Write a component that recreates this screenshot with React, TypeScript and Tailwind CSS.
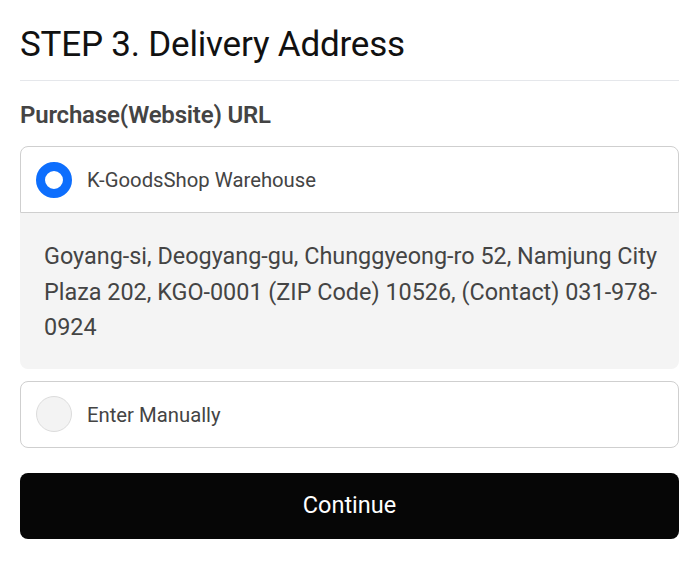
export default function App() {
  return (
    <div className="w-[699px] h-[565px] bg-white px-5 pt-[23px]" style={{ fontFamily: "Roboto, 'Noto Sans', sans-serif" }}>
      <h1 className="text-[35px] leading-[44px] tracking-[-0.2px] text-[#111] font-normal">STEP 3. Delivery Address</h1>
      <div className="mt-[13px] h-px bg-[#e5e7eb]" />
      <div className="mt-[20px] text-[24px] leading-[28px] tracking-[-0.2px] font-semibold text-[#444]">Purchase(Website) URL</div>
      <div className="mt-[17px]">
        <label className="flex items-center h-[67px] border border-[#cfcfcf] rounded-t-lg px-[15px] gap-[15px] bg-white">
          <span className="w-9 h-9 rounded-full border-[9px] border-[#0d6efd] bg-white" />
          <span className="text-[20.3px] text-[#444] pt-[2px]">K-GoodsShop Warehouse</span>
        </label>
        <div className="bg-[#f4f4f4] rounded-b-lg pl-6 pr-[14px] pt-[26px] pb-[23px] text-[23.4px] leading-[35.5px] text-[#444]">
          Goyang-si, Deogyang-gu, Chunggyeong-ro 52, Namjung City Plaza 202, KGO-0001 (ZIP Code) 10526, (Contact) 031-978-0924
        </div>
      </div>
      <label className="mt-[12px] flex items-center h-[67px] border border-[#cfcfcf] rounded-lg px-[15px] gap-[15px] bg-white">
        <span className="w-9 h-9 rounded-full border border-[#dcdcdc] bg-[#f3f3f3]" />
        <span className="text-[20.3px] text-[#444] pt-[2px]">Enter Manually</span>
      </label>
      <button className="mt-[25px] w-full h-[66px] rounded-lg bg-[#060606] text-white text-[23.5px]">Continue</button>
    </div>
  );
}
